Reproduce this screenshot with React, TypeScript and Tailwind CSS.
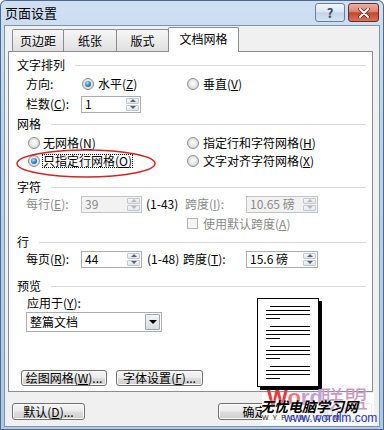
import React from "react";

function Radio({ checked }: { checked?: boolean }) {
  return (
    <div className="w-[12px] h-[12px] shrink-0 rounded-full border border-[#8c8e92] bg-[radial-gradient(circle_at_50%_45%,#fdfdfd_0%,#ececec_40%,#c9c9c9_100%)] flex items-center justify-center">
      {checked && (
        <div className="w-[6px] h-[6px] rounded-full bg-[radial-gradient(circle_at_40%_35%,#b6e6ff_0%,#3a8dc4_45%,#0f3e63_100%)]" />
      )}
    </div>
  );
}

function M({ c }: { c: string }) {
  return (
    <>
      (<span className="underline underline-offset-1">{c}</span>)
    </>
  );
}

function Arrow({ up, disabled }: { up?: boolean; disabled?: boolean }) {
  const color = disabled ? "border-b-[#b5b9c0]" : "border-b-[#56637a]";
  const color2 = disabled ? "border-t-[#b5b9c0]" : "border-t-[#56637a]";
  return up ? (
    <div className={`w-0 h-0 border-x-[3px] border-x-transparent border-b-[3px] ${color}`} />
  ) : (
    <div className={`w-0 h-0 border-x-[3px] border-x-transparent border-t-[3px] ${color2}`} />
  );
}

function Spin({ value, className, disabled }: { value: string; className: string; disabled?: boolean }) {
  return (
    <div
      className={`${className} h-[17px] shrink-0 flex border ${
        disabled ? "border-[#c2c4c8] bg-[#f2f2f2] text-[#8a8a8a]" : "border-[#abadb3] bg-white text-black"
      }`}
    >
      <div className="flex-1 pl-[3px] flex items-center">{value}</div>
      <div className="w-[15px] flex flex-col p-px gap-px">
        <div className="flex-1 flex items-center justify-center border rounded-[1px] border-[#c3c8d0] bg-[linear-gradient(180deg,#f8f8f8,#e2e5ea)]">
          <Arrow up disabled={disabled} />
        </div>
        <div className="flex-1 flex items-center justify-center border rounded-[1px] border-[#c3c8d0] bg-[linear-gradient(180deg,#f8f8f8,#e2e5ea)]">
          <Arrow disabled={disabled} />
        </div>
      </div>
    </div>
  );
}

function Btn({ children, className }: { children: React.ReactNode; className: string }) {
  return (
    <div
      className={`${className} shrink-0 rounded-[3px] border border-[#707070] bg-[linear-gradient(180deg,#f4f4f4_0%,#ececec_48%,#dddddd_52%,#cfcfcf_100%)] shadow-[inset_0_0_0_1px_#fcfcfc] flex items-center justify-center whitespace-nowrap`}
    >
      {children}
    </div>
  );
}

function Section({ label, className }: { label: string; className: string }) {
  return (
    <div className={`${className} flex items-center pl-[8px] pr-[6px]`}>
      <span>{label}</span>
      <div className="flex-1 h-px ml-[10px] bg-[#d7d9dc]" />
    </div>
  );
}

function PageLines() {
  return (
    <div className="flex flex-col gap-[3px]">
      <div className="ml-[12px] w-[40px] h-px bg-black" />
      <div className="ml-[8px] w-[44px] h-px bg-black" />
      <div className="ml-[8px] w-[44px] h-px bg-black" />
      <div className="ml-[8px] w-[14px] h-px bg-black" />
    </div>
  );
}

export default function App() {
  return (
    <div className="relative w-[384px] h-[430px] overflow-hidden rounded-t-[6px] shadow-[inset_0_0_0_1px_#4f6a8c] bg-[linear-gradient(180deg,#cfe0f3_0%,#bcd2ec_30%,#aec8e5_100%)] font-['Noto_Sans_CJK_SC','Noto_Sans',sans-serif] text-[12px] leading-none text-black">
      {/* title bar */}
      <div className="flex h-[26px] items-start">
        <div className="pl-[5px] pt-[6px] text-[13px]">页面设置</div>
        <div className="flex-1" />
        <div className="mt-[3px] w-[30px] h-[19px] rounded-[3px] border border-[#6b7d99] bg-[linear-gradient(180deg,#f1f6fb_0%,#dce7f3_45%,#c3d5ea_52%,#d6e3f1_100%)] flex items-center justify-center text-[13px] font-bold text-[#3b4c6b]">
          ?
        </div>
        <div className="mt-[3px] ml-[3px] mr-[5px] w-[31px] h-[19px] rounded-[3px] border border-[#6f2a22] bg-[linear-gradient(180deg,#eab0a3_0%,#d98470_45%,#c4462e_52%,#d6735c_100%)] flex items-center justify-center">
          <svg width="12" height="10" viewBox="0 0 12 10">
            <path d="M2 1 L10 9 M10 1 L2 9" stroke="#5a1a12" strokeWidth="3.4" strokeLinecap="round" />
            <path d="M2 1 L10 9 M10 1 L2 9" stroke="#ffffff" strokeWidth="2" strokeLinecap="round" />
          </svg>
        </div>
      </div>

      {/* client area */}
      <div className="mx-[5px] h-[400px] bg-[#f0f0f0] shadow-[0_0_0_1px_#7f93ad]">
        {/* tabs */}
        <div className="relative z-10 flex items-end h-[25px] pl-[7px]">
          <div className="w-[52px] h-[22px] border border-b-0 border-[#898c95] rounded-t-[2px] bg-[linear-gradient(180deg,#f6f6f6,#e1e1e1)] flex items-center justify-center">
            页边距
          </div>
          <div className="-ml-px w-[54px] h-[22px] border border-b-0 border-[#898c95] rounded-t-[2px] bg-[linear-gradient(180deg,#f6f6f6,#e1e1e1)] flex items-center justify-center">
            纸张
          </div>
          <div className="-ml-px w-[53px] h-[22px] border border-b-0 border-[#898c95] rounded-t-[2px] bg-[linear-gradient(180deg,#f6f6f6,#e1e1e1)] flex items-center justify-center">
            版式
          </div>
          <div className="-ml-px mb-[-1px] w-[71px] h-[25px] border border-b-0 border-[#898c95] rounded-t-[2px] bg-white flex items-center justify-center pb-[2px]">
            文档网格
          </div>
        </div>

        {/* panel */}
        <div className="ml-[3px] w-[365px] h-[341px] border border-[#898c95] bg-white">
          <div className="mt-[5px]" />
          <Section label="文字排列" className="h-[16px]" />
          {/* 方向 */}
          <div className="h-[22px] flex items-center pl-[17px]">
            <div className="w-[55px]">方向:</div>
            <div className="w-[105px] flex items-center">
              <div className="ml-[1px]">
                <Radio checked />
              </div>
              <span className="ml-[4px]">
                水平<M c="Z" />
              </span>
            </div>
            <div className="flex items-center">
              <div className="ml-[1px]">
                <Radio />
              </div>
              <span className="ml-[4px]">
                垂直<M c="V" />
              </span>
            </div>
          </div>
          {/* 栏数 */}
          <div className="h-[18px] flex items-center pl-[17px]">
            <div className="w-[55px]">
              栏数<M c="C" />:
            </div>
            <Spin value="1" className="w-[60px]" />
          </div>

          <Section label="网格" className="h-[22px]" />
          <div className="h-[16px] flex items-center pl-[19px]">
            <div className="w-[158px] flex items-center">
              <Radio />
              <span className="ml-[3px]">
                无网格<M c="N" />
              </span>
            </div>
            <div className="flex items-center">
              <div className="ml-[1px]">
                <Radio />
              </div>
              <span className="ml-[4px]">
                指定行和字符网格<M c="H" />
              </span>
            </div>
          </div>
          <div className="h-[20px] flex items-center pl-[19px]">
            <div className="w-[158px] flex items-center">
              <Radio checked />
              <span className="ml-[2px] px-px py-[1px] outline outline-1 outline-dotted outline-black -outline-offset-1">
                只指定行网格<M c="O" />
              </span>
            </div>
            <div className="flex items-center">
              <div className="ml-[1px]">
                <Radio />
              </div>
              <span className="ml-[4px]">
                文字对齐字符网格<M c="X" />
              </span>
            </div>
          </div>

          <Section label="字符" className="h-[24px] pt-[8px]" />
          <div className="h-[18px] flex items-center pl-[17px]">
            <div className="w-[55px] text-[#8a8a8a]">
              每行<M c="E" />:
            </div>
            <Spin value="39" className="w-[61px]" disabled />
            <div className="ml-[4px] w-[39px]">(1-43)</div>
            <div className="w-[61px] text-[#8a8a8a]">
              跨度<M c="I" />:
            </div>
            <Spin value="10.65 磅" className="w-[72px]" disabled />
          </div>
          <div className="h-[21px] flex items-center pl-[178px]">
            <div className="w-[11px] h-[11px] border border-[#b4b4b4] bg-[#f4f4f4]" />
            <span className="ml-[5px] text-[#8a8a8a]">
              使用默认跨度<M c="A" />
            </span>
          </div>

          <Section label="行" className="h-[16px]" />
          <div className="h-[18px] flex items-center pl-[17px]">
            <div className="w-[55px]">
              每页<M c="R" />:
            </div>
            <Spin value="44" className="w-[61px]" />
            <div className="ml-[5px] w-[36px]">(1-48)</div>
            <div className="w-[63px]">
              跨度<M c="T" />:
            </div>
            <Spin value="15.6 磅" className="w-[72px]" />
          </div>

          <Section label="预览" className="h-[30px] pt-[6px]" />
          <div className="flex">
            <div className="w-[200px] flex flex-col">
              <div className="h-[9px] flex items-center ml-[18px]">
                应用于<M c="Y" />:
              </div>
              <div className="mt-[5px] ml-[17px] w-[136px] h-[20px] border border-[#abadb3] bg-white flex">
                <div className="flex-1 pl-[3px] flex items-center">整篇文档</div>
                <div className="w-[15px] m-px border border-[#a0a4ab] rounded-[1px] bg-[linear-gradient(180deg,#f4f4f4,#d9dde2)] flex items-center justify-center">
                  <div className="w-0 h-0 border-x-[4px] border-x-transparent border-t-[4px] border-t-black" />
                </div>
              </div>
              <div className="mt-[38px] ml-[12px] flex">
                <Btn className="w-[86px] h-[16px]">
                  绘图网格<M c="W" />...
                </Btn>
                <Btn className="ml-[9px] w-[87px] h-[16px]">
                  字体设置<M c="F" />...
                </Btn>
              </div>
            </div>
            <div className="ml-[48px] w-[62px] h-[89px] border border-black bg-white shadow-[3px_3px_0_0_#000] flex flex-col pt-[7px] gap-[7px]">
              <PageLines />
              <PageLines />
              <PageLines />
              <PageLines />
            </div>
          </div>
        </div>

        {/* bottom buttons */}
        <div className="mt-[11px] flex">
          <Btn className="ml-[7px] w-[73px] h-[17px]">
            默认<M c="D" />...
          </Btn>
          <Btn className="ml-[133px] w-[73px] h-[17px]">确定</Btn>
          <Btn className="ml-[7px] w-[74px] h-[17px]">取消</Btn>
        </div>
      </div>

      {/* red highlight ellipse */}
      <svg className="absolute left-0 top-0 pointer-events-none" width="384" height="430">
        <ellipse cx="86" cy="163.5" rx="69" ry="13.5" fill="none" stroke="#d42424" strokeWidth="1.5" />
      </svg>

      {/* watermark */}
      <div className="absolute left-[262px] top-[393px] w-[112px] h-[32px] bg-white/85" />
      <div className="absolute left-[267px] top-[387px] text-[22px] font-bold font-['Liberation_Sans',sans-serif] leading-none">
        <span className="text-[#e03a3a]">W</span>
        <span className="text-[#e87878]">o</span>
        <span className="text-[#c0a0d0]">rd</span>
      </div>
      <div className="absolute left-[320px] top-[386px] text-[24px] leading-none text-[#c99ac2]">联盟</div>
      <div className="absolute left-[260px] top-[399px] text-[14px] font-bold italic leading-none text-black [text-shadow:0_0_2px_#fff]">
        无忧电脑学习网
      </div>
      <div className="absolute left-[262px] top-[414px] text-[7px] leading-none tracking-[4px] text-[#222] font-['Liberation_Sans',sans-serif]">
        WYPCW.COM
      </div>
      <div className="absolute left-[284px] top-[412px] text-[12px] leading-none text-[#2230c0] font-['Liberation_Sans',sans-serif]">
        www.wordlm.com
      </div>
    </div>
  );
}
